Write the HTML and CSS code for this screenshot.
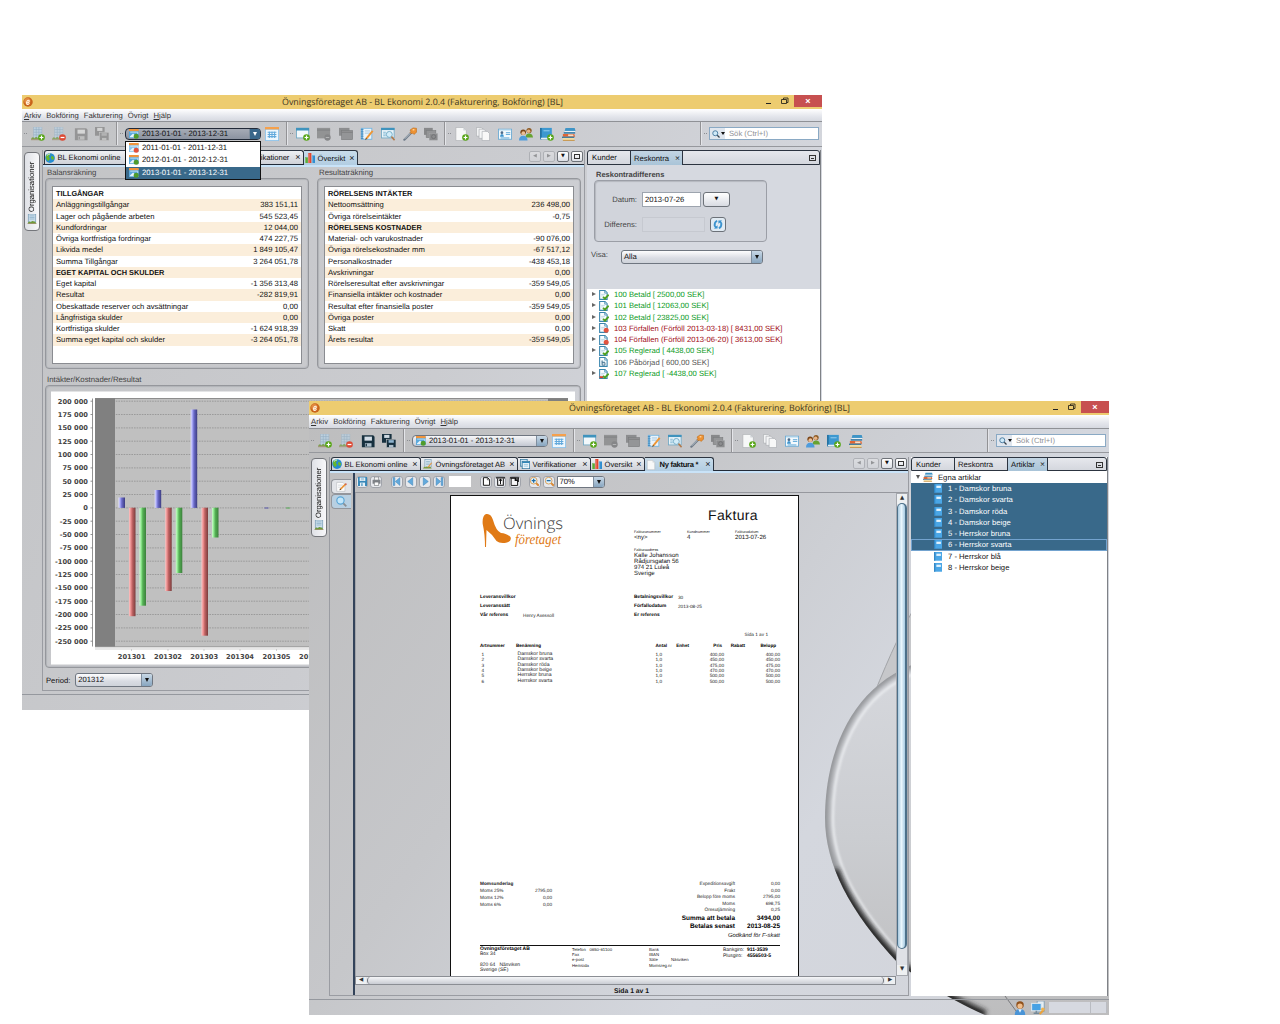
FILE: index.html
```html
<!DOCTYPE html>
<html lang="sv">
<head>
<meta charset="utf-8">
<title>BL Ekonomi</title>
<link rel="stylesheet" href="styles.css">
</head>
<body>
<svg class="defs" aria-hidden="true">
<defs>
<linearGradient id="gb"><stop offset="0" stop-color="#e4e4ff"/><stop offset=".3" stop-color="#9c9cf0"/><stop offset=".5" stop-color="#6a6ac8"/><stop offset="1" stop-color="#3c3c80"/></linearGradient>
<linearGradient id="gr"><stop offset="0" stop-color="#ffc4c4"/><stop offset=".3" stop-color="#e88a8a"/><stop offset=".5" stop-color="#c06464"/><stop offset="1" stop-color="#7a3c3c"/></linearGradient>
<linearGradient id="gg"><stop offset="0" stop-color="#d0ffd0"/><stop offset=".3" stop-color="#84e084"/><stop offset=".5" stop-color="#54b054"/><stop offset="1" stop-color="#3c803c"/></linearGradient>
<linearGradient id="disc" x1="0" y1="0" x2="0" y2="1"><stop offset="0" stop-color="#d6d8dd"/><stop offset=".5" stop-color="#cbcdd1"/><stop offset="1" stop-color="#bdbdbe"/></linearGradient>
<filter id="soft"><feGaussianBlur stdDeviation="2.5"/></filter>
<filter id="soft1"><feGaussianBlur stdDeviation=".8"/></filter>
<clipPath id="inside"><path d="M920 662C850 685 825 755 825 818C825 865 850 912 898 963C925 983 945 997 985 1015H1109V662z"/></clipPath>
<symbol id="plus" viewBox="0 0 8 8"><circle cx="4" cy="4" r="3.8" fill="#58a618"/><path d="M4 1.800v4.400M1.800 4h4.400" stroke="#fff" stroke-width="1.4"/></symbol>
<symbol id="minus" viewBox="0 0 8 8"><circle cx="4" cy="4" r="3.8" fill="#dd4b36"/><path d="M1.800 4h4.400" stroke="#fff" stroke-width="1.4"/></symbol>
<symbol id="sheet" viewBox="0 0 16 16"><rect x="3" y="0" width="9.500" height="12.500" fill="#bdd0df" stroke="#a3b7c6" stroke-width=".7"/><path d="M3 3h9.500M3 6h9.500M3 9h9.500M6 0v12M9 0v12" stroke="#93adc1" stroke-width=".7"/><path d="M0 14q1.500-4 4-1 2-3 4 0 2-3 4 1z" fill="#7da04e"/><path d="M0 14.500h12" stroke="#9c8a66"/></symbol>
<symbol id="sheet-add" viewBox="0 0 16 16"><use href="#sheet"/><use href="#plus" x="8" y="8" width="8" height="8"/></symbol>
<symbol id="sheet-del" viewBox="0 0 16 16"><use href="#sheet" opacity=".8"/><use href="#minus" x="8" y="8" width="8" height="8"/></symbol>
<symbol id="save" viewBox="0 0 16 16"><path d="M1 1.500h13l1.500 1.500v12H1z" fill="currentColor"/><rect x="4" y="3" width="8.500" height="4.600" fill="#d3dde6"/><rect x="4.500" y="10.500" width="7.500" height="4" fill="#aebfcc"/><path d="M6 11v3" stroke="currentColor" stroke-width="1.500"/></symbol>
<symbol id="saves" viewBox="0 0 16 16"><rect x="0" y="0" width="11" height="10" fill="currentColor"/><rect x="2.500" y="1" width="6" height="3.500" fill="#cfd9e2"/><rect x="5" y="6" width="11" height="9.500" fill="currentColor" stroke="#c5c6c9" stroke-width=".7"/><rect x="7.500" y="7" width="6" height="3" fill="#8fb4d0"/><rect x="8" y="12.500" width="5" height="3" fill="#aebfcc"/></symbol>
<symbol id="cal" viewBox="0 0 16 16"><rect x="0" y="1" width="15.500" height="13.500" fill="#5ba9dc"/><rect x="0" y="0" width="15.500" height="3.500" fill="#f0943c"/><path d="M1.500 12l5-5 4 4v2h-9z" fill="#e6f3fb"/><path d="M2 5h12v3" stroke="#bfe0f4" fill="none" stroke-width="1.500"/><circle cx="11.500" cy="11.500" r="4" fill="#4f9c2c"/></symbol>
<symbol id="cal-red" viewBox="0 0 16 16"><rect x="0" y="1" width="15.500" height="13.500" fill="#8fc5ea"/><rect x="0" y="0" width="15.500" height="3.500" fill="#f0943c"/><path d="M1.500 12l5-5 4 4v2h-9z" fill="#e6f3fb"/><path d="M2 5h12v3" stroke="#d5ebf8" fill="none" stroke-width="1.500"/><circle cx="11.500" cy="11.500" r="4" fill="#e2503c"/></symbol>
<symbol id="calgrid" viewBox="0 0 16 16"><rect x="0" y="0" width="16" height="16" fill="#8cc2e8"/><rect x="0" y="0" width="16" height="2.800" fill="#f5a04c"/><rect x="1" y="3.200" width="14" height="11.800" fill="#eef7fd"/><path d="M3 6h10M3 8.500h10M3 11h10M5 5v7.500M8 5v7.500M11 5v7.500" stroke="#62a9dc" stroke-width="1.200"/></symbol>
<symbol id="win-add" viewBox="0 0 16 16"><rect x=".5" y="1.500" width="14" height="11" fill="#f2f8fb" stroke="#73a9c4"/><rect x="0" y="1" width="15" height="3" fill="#3f93bd"/><use href="#plus" x="8" y="8" width="8" height="8"/></symbol>
<symbol id="win-del" viewBox="0 0 16 16"><rect x="0" y="1" width="15" height="12" fill="#929394"/><path d="M0 3.500h15" stroke="#7d7e80"/><circle cx="12" cy="12" r="3.600" fill="#858688"/><path d="M10 12h4" stroke="#b9babb"/></symbol>
<symbol id="wins" viewBox="0 0 16 16"><rect x="0" y="1" width="12" height="9" fill="#8c8d8f"/><rect x="3" y="4" width="12.500" height="10.500" fill="#949597" stroke="#7b7c7e" stroke-width=".7"/><path d="M3 6h12.500" stroke="#7b7c7e"/></symbol>
<symbol id="wins-find" viewBox="0 0 16 16"><rect x="0" y="1" width="10" height="8" fill="#87888a"/><rect x="2.500" y="4" width="11" height="8" fill="#949597" stroke="#7b7c7e" stroke-width=".7"/><rect x="6" y="7.500" width="9.500" height="7.500" fill="#8b8c8e" stroke="#a7a8aa" stroke-width=".5"/><circle cx="11" cy="11" r="2.300" fill="none" stroke="#6f7072"/></symbol>
<symbol id="note" viewBox="0 0 16 16"><rect x="1" y="1" width="13" height="13.500" fill="#74b4df"/><rect x="3.500" y="2" width="9.500" height="11.500" fill="#e9f3fa"/><path d="M1 3h3M1 5.500h3M1 8h3M1 10.500h3M1 13h3" stroke="#3e85b8"/><path d="M5.500 7h6M5.500 4.500h6" stroke="#9cc5e0"/><path d="M7 13.500l7.500-9" stroke="#ed9636" stroke-width="2.200"/><path d="M5.800 15l1-2.500 1.200 1z" fill="#4a3820"/></symbol>
<symbol id="win-find" viewBox="0 0 16 16"><rect x=".5" y="1.500" width="14.500" height="11" fill="#eaf4f9" stroke="#73a9c4"/><rect x="0" y="1" width="15.500" height="2.500" fill="#3f93bd"/><path d="M2.500 6h3M2.500 8h3M2.500 10h3" stroke="#77b2d1"/><circle cx="9.500" cy="8.500" r="3.400" fill="#d2ecf8" stroke="#6aa6c2"/><path d="M12 11l3.500 4" stroke="#b27a4c" stroke-width="1.800"/></symbol>
<symbol id="wand" viewBox="0 0 16 16"><path d="M1.500 14.500L10 6" stroke="#6e7b88" stroke-width="2.400" stroke-linecap="round"/><path d="M2 13.500l7-7" stroke="#c3ccd6"/><path d="M8 3.500L11.500 1l4 .5v4.500l-3 2.500-1.500-1.500-2 .5-1-1.500 1-1z" fill="#ee9232" stroke="#b66516" stroke-width=".6"/><path d="M11 3.500l2-.5" stroke="#ffe0b5" stroke-width="1.300"/></symbol>
<symbol id="page" viewBox="0 0 16 16"><path d="M2 .5h8.500L14 4v11.500H2z" fill="#f7f8f8" stroke="#a9acb0" stroke-width=".7"/><path d="M10.500.5V4H14z" fill="#d2d6da"/></symbol>
<symbol id="page-add" viewBox="0 0 16 16"><use href="#page" x="-1"/><use href="#plus" x="8" y="8" width="8" height="8"/></symbol>
<symbol id="pages" viewBox="0 0 16 16"><path d="M.5.500H6L8 2.500v8H.500z" fill="#f2f3f4" stroke="#a5a8ac" stroke-width=".7"/><path d="M3.500 2.500H9l2.500 2.500v8h-8z" fill="#f4f5f6" stroke="#a5a8ac" stroke-width=".7"/><path d="M7 5h6l2.500 2.500v8H7z" fill="#f8f8f8" stroke="#a5a8ac" stroke-width=".7"/></symbol>
<symbol id="card" viewBox="0 0 16 16"><rect x=".5" y="2.500" width="15" height="11.500" fill="#f4fafd" stroke="#69a9d2"/><path d="M1 3.500h14" stroke="#b7d9ee" stroke-width="1.200"/><circle cx="4.500" cy="6.500" r="1.600" fill="#4c6b8a"/><path d="M2.300 11q0-3 2.200-3t2.200 3z" fill="#3d93cd"/><path d="M9 6.500h5M9 8.500h5M3 12.500h10" stroke="#4fa0d3"/></symbol>
<symbol id="people" viewBox="0 0 16 16"><circle cx="11.500" cy="4" r="3" fill="#8d5a24"/><circle cx="11" cy="4.800" r="2" fill="#e8b384"/><path d="M7.500 12q0-4.500 4-4.500t4.500 4.500z" fill="#67a331"/><circle cx="4.800" cy="6" r="3.200" fill="#7c4516"/><circle cx="5" cy="7" r="2.200" fill="#edbe93"/><path d="M0 15.500Q0 10 4.800 10t5 5.500z" fill="#4f9cdc"/></symbol>
<symbol id="book" viewBox="0 0 16 16"><path d="M2 0h14v15.500H2z" fill="#4aa6e6"/><path d="M2 0h2v15.500H2z" fill="#2f83c0"/><path d="M6 3h8v4H6z" fill="#e3f3fd"/></symbol>
<symbol id="book-add" viewBox="0 0 16 16"><path d="M0 1h13.500v13H0z" fill="#3d98d0"/><path d="M0 1h2v13H0z" fill="#2573a4"/><path d="M4 3.500h7v1.500H4z" fill="#7fc1e8"/><path d="M1 13h12" stroke="#e6eef3" stroke-width="1.500"/><use href="#plus" x="8" y="8" width="8" height="8"/></symbol>
<symbol id="books" viewBox="0 0 16 16"><path d="M4 1h10.500l1 3.500H3z" fill="#3f94c6"/><path d="M3 4.500h12v1.500H3z" fill="#eaf1f5"/><path d="M2 6h13v1.500H2z" fill="#1e6c9c"/><path d="M1 8h13l1 3H1z" fill="#e16634"/><path d="M7 8.500h6v2H7z" fill="#f8dcc3"/><path d="M0 11h14v1.500H0z" fill="#31759a"/><path d="M1 12.500h13V15H1z" fill="#f1dca6"/><path d="M1 15.300h13.500" stroke="#c58a33"/></symbol>
<symbol id="globe" viewBox="0 0 16 16"><circle cx="8" cy="8" r="7.800" fill="#268cd2"/><path d="M2 4q4-5 7-2.500L6 6l2 3-3 4q-3-3-3.500-6zM11 4l3.500 3-1 4-3-1-1-3z" fill="#69b72b"/><path d="M3 4q2-2.500 5-2.500" stroke="#d8f2ff" stroke-width="1.500" fill="none"/></symbol>
<symbol id="org" viewBox="0 0 16 16"><rect x="3" y="1" width="10" height="12" fill="#dae7f0" stroke="#6f94ad"/><path d="M5 4h6M5 6.500h6M5 9h6" stroke="#7ca5be"/><path d="M0 15q2-4 4-2 2-2 4 0 3-3 6 2z" fill="#7b993c"/><path d="M8 13l6-7" stroke="#e9963e" stroke-width="1.800"/></symbol>
<symbol id="orgs" viewBox="0 0 16 16"><rect x="2" y="0" width="12" height="13" fill="#cfe0ec" stroke="#6790ad"/><path d="M4 3h8M4 5.500h8M4 8h8" stroke="#78a3c0"/><path d="M1 15q2-5 5-2 3-3 5-1 2-1 4 3z" fill="#6f9a3a"/><path d="M1 15.300h14" stroke="#8d7449"/></symbol>
<symbol id="verif" viewBox="0 0 16 16"><rect x=".5" y=".5" width="11" height="11" fill="#cfe5f1" stroke="#33789f" stroke-width="1.300"/><rect x="3.500" y="4" width="12" height="11.500" fill="#eef7fb" stroke="#33789f" stroke-width="1.300"/><path d="M3.500 5.500h12" stroke="#2f86b8" stroke-width="2"/><path d="M6 9h7M6 11.500h7" stroke="#75b2d4"/></symbol>
<symbol id="bars" viewBox="0 0 16 16"><rect x="0" y="7" width="4.500" height="9" fill="#55a832"/><rect x="5.200" y="0" width="5" height="16" fill="#e3452c"/><rect x="11" y="4" width="5" height="12" fill="#2f8dd0"/><path d="M1 8v8M6.500 1v15M12.200 5v11" stroke="#fff" stroke-opacity=".5"/></symbol>
<symbol id="mag" viewBox="0 0 16 16"><circle cx="6.500" cy="6.500" r="5" fill="#cfe9f8" stroke="#44759b" stroke-width="1.800"/><path d="M10.500 10.500l4.500 4.500" stroke="#33414d" stroke-width="2.500"/></symbol>
<symbol id="zin" viewBox="0 0 16 16"><path d="M10.500 10.500l5 5" stroke="#d88834" stroke-width="3.500"/><circle cx="6.500" cy="6.500" r="6" fill="#e1f3fd" stroke="#d99440" stroke-width="1.500"/><path d="M6.500 3v7M3 6.500h7" stroke="#1c6aa4" stroke-width="2.200"/></symbol>
<symbol id="zout" viewBox="0 0 16 16"><path d="M10.500 10.500l5 5" stroke="#d88834" stroke-width="3.500"/><circle cx="6.500" cy="6.500" r="6" fill="#e1f3fd" stroke="#d99440" stroke-width="1.500"/><path d="M3 6.500h7" stroke="#1c6aa4" stroke-width="2.200"/></symbol>
<symbol id="first" viewBox="0 0 16 16"><path d="M2 1h3v14H2zM14 1v14L6 8z" fill="#62a9dc" stroke="#3b80b3" stroke-width=".8"/></symbol>
<symbol id="prev" viewBox="0 0 16 16"><path d="M12 1v14L3 8z" fill="#62a9dc" stroke="#3b80b3" stroke-width=".8"/></symbol>
<symbol id="next" viewBox="0 0 16 16"><path d="M4 1v14l9-7z" fill="#62a9dc" stroke="#3b80b3" stroke-width=".8"/></symbol>
<symbol id="last" viewBox="0 0 16 16"><path d="M2 1v14l8-7zM11 1h3v14h-3z" fill="#62a9dc" stroke="#3b80b3" stroke-width=".8"/></symbol>
<symbol id="pg1" viewBox="0 0 16 16"><path d="M2.500 1.200h7.500l3.500 3.500v10h-11z" fill="#fff" stroke="#111" stroke-width="1.700"/><path d="M9.500 1v4h4" fill="none" stroke="#111"/></symbol>
<symbol id="pg2" viewBox="0 0 16 16"><path d="M3 2.500v12h10v-12" fill="#fff" stroke="#111" stroke-width="1.800"/><path d="M0 1.500h16" stroke="#111" stroke-width="2.200"/><path d="M8 4v9M5.500 6.500L8 4l2.500 2.500" stroke="#111" stroke-width="1.800" fill="none"/></symbol>
<symbol id="pg3" viewBox="0 0 16 16"><path d="M2 2v13h11.500V6l-3.500-4z" fill="#f5f5f6" stroke="#111" stroke-width="1.700"/><path d="M0 1.500h16M14.500 1v8M9.500 2v4h5" stroke="#111" stroke-width="2.400" fill="none"/></symbol>
<symbol id="printer" viewBox="0 0 16 16"><rect x="4" y="0" width="8" height="6" fill="#f5f5f5" stroke="#6d7074"/><rect x="1" y="5" width="14" height="7" rx="1" fill="#7f8388"/><rect x="4" y="9" width="8" height="6" fill="#fafafa" stroke="#6d7074"/></symbol>
<symbol id="bsave" viewBox="0 0 16 16"><rect x="0" y="0" width="16" height="16" fill="#3788b9"/><rect x="3" y="1" width="10" height="6" fill="#eef6fa"/><path d="M5 3h6M5 5h6" stroke="#67a1c4"/><rect x="3.500" y="10" width="9" height="6" fill="#e4f0f7"/><path d="M7 11v5" stroke="#3788b9" stroke-width="2"/></symbol>
<symbol id="edit" viewBox="0 0 16 16"><path d="M1 2h9l3 3v10H1z" fill="#fdfdfd" stroke="#aaadb2" stroke-width=".7"/><path d="M3 6h7M3 9h5" stroke="#c5c9cd"/><path d="M6.500 12l7-7" stroke="#ea9338" stroke-width="2.500"/><path d="M5 13.500l.8-2.500 1.800 1.700z" fill="#463723"/><circle cx="14.200" cy="4.600" r="1.400" fill="#d3664e"/></symbol>
<symbol id="look" viewBox="0 0 16 16"><path d="M10 10l5 5" stroke="#8b9095" stroke-width="2.600"/><circle cx="6.500" cy="6.500" r="5.300" fill="#c3e6fa" stroke="#5ba6d6" stroke-width="1.700"/></symbol>
<symbol id="doc" viewBox="0 0 16 16"><path d="M1 .8h8.500L13 4.300V15H1z" fill="#fafdff" stroke="#3a86ae" stroke-width="1.700"/><path d="M9 1v4h4" fill="#cde2ee" stroke="#3a86ae"/><path d="M3.500 7h6M3.500 9.500h4" stroke="#9fc3d8"/></symbol>
<symbol id="doc-ok" viewBox="0 0 16 16"><use href="#doc"/><path d="M6.500 11l3 3 6-6.500" stroke="#4fa121" stroke-width="3" fill="none"/></symbol>
<symbol id="doc-neg" viewBox="0 0 16 16"><use href="#doc"/><path d="M1 13h6" stroke="#d6402c" stroke-width="3"/><path d="M6.500 11l3 3 6-6.500" stroke="#4fa121" stroke-width="3" fill="none"/></symbol>
<symbol id="doc-bad" viewBox="0 0 16 16"><use href="#doc"/><circle cx="11.500" cy="11.500" r="4" fill="#e25440"/></symbol>
<symbol id="doc-b" viewBox="0 0 16 16"><use href="#doc"/><path d="M5 5.500v7.500h4.500v-4H5" fill="none" stroke="#3f6f8c" stroke-width="1.500"/></symbol>
<symbol id="user" viewBox="0 0 16 16"><path d="M2 16q0-7 6-7t6 7z" fill="#4a94d6"/><path d="M6 9.500l2 4 2-4z" fill="#e8f3fc"/><circle cx="8" cy="4.500" r="4.300" fill="#90501a"/><circle cx="8" cy="5.800" r="3" fill="#f0bd8a"/></symbol>
<symbol id="pc" viewBox="0 0 16 16"><rect x="7" y="0" width="8" height="12" fill="#e6eef3" stroke="#6f8ea5" stroke-width=".8"/><rect x=".7" y="2.700" width="11" height="8.500" fill="#48a2e4" stroke="#dfe8ee" stroke-width="1.200"/><path d="M3 14h7M6 11v3" stroke="#758a99" stroke-width="1.600"/><path d="M10 15l4.500-5" stroke="#eaa23c" stroke-width="2.300"/><circle cx="13.500" cy="9.500" r="2" fill="#f0b452"/></symbol>
<symbol id="logo" viewBox="0 0 16 16"><circle cx="8" cy="8" r="7.600" fill="#c9641b"/><circle cx="7" cy="6.500" r="5" fill="#e38b42"/><path d="M5.500 9.500q5-.5 4.500-3.500-1-2-3.500.5-2 3.500 0 5.500 2 .5 4-2" fill="none" stroke="#fff3e3" stroke-width="1.700"/></symbol>
<symbol id="restore" viewBox="0 0 8 8"><path d="M.5 2.500h5v4h-5zM2.500 2.500V1H7v4.500H5.500" fill="none" stroke="#2f2a1c" stroke-width=".9"/></symbol>
</defs>
</svg>

<main class="desktop">

<section class="win win-back">
  <header class="title"><svg class="i11"><use href="#logo"/></svg><h1>Övningsföretaget AB - BL Ekonomi 2.0.4 (Fakturering, Bokföring) [BL]</h1><div class="wbtns"><i class="wmin"></i><svg><use href="#restore"/></svg><b>×</b></div></header>
  <nav class="menu"><span><u>A</u>rkiv</span><span>Bokföring</span><span>Fakturering</span><span>Övrigt</span><span><u>H</u>jälp</span></nav>
  <div class="tools">
    <div class="tg g1 off"><i class="grip"></i><svg><use href="#sheet-add"/></svg><svg><use href="#sheet-del"/></svg><svg><use href="#save"/></svg><svg><use href="#saves"/></svg></div>
    <div class="tg g2"><i class="grip"></i>
      <div class="combo year open"><svg><use href="#cal"/></svg><span>2013-01-01 - 2013-12-31</span><i class="arr"></i>
        <ul class="drop"><li><svg><use href="#cal-red"/></svg>2011-01-01 - 2011-12-31</li><li><svg><use href="#cal"/></svg>2012-01-01 - 2012-12-31</li><li class="sel"><svg><use href="#cal"/></svg>2013-01-01 - 2013-12-31</li></ul>
      </div><svg><use href="#calgrid"/></svg></div>
    <div class="tg g3"><i class="grip"></i><svg><use href="#win-add"/></svg><svg><use href="#win-del"/></svg><svg><use href="#wins"/></svg><svg><use href="#note"/></svg><svg><use href="#win-find"/></svg><svg><use href="#wand"/></svg><svg><use href="#wins-find"/></svg></div>
    <div class="tg g4"><i class="grip"></i><svg><use href="#page-add"/></svg><svg><use href="#pages"/></svg><svg><use href="#card"/></svg><svg><use href="#people"/></svg><svg><use href="#book-add"/></svg><svg><use href="#books"/></svg></div>
    <div class="tg g5"><i class="grip"></i><div class="search"><svg><use href="#mag"/></svg><i class="tri"></i><span>Sök (Ctrl+I)</span></div></div>
  </div>
  <div class="work">
    <aside class="side"><div class="vtab"><svg><use href="#orgs"/></svg><span>Organisationer</span></div></aside>
    <div class="pane left">
      <div class="tabs">
        <div class="tab t1"><svg><use href="#globe"/></svg><span>BL Ekonomi online</span><i>×</i></div>
        <div class="tab t2"><svg><use href="#org"/></svg><span>Övningsföretaget AB</span><i>×</i></div>
        <div class="tab t3"><svg><use href="#verif"/></svg><span>Verifikationer</span><i>×</i></div>
        <div class="tab t4 on"><svg><use href="#bars"/></svg><span>Översikt</span><i>×</i></div>
        <div class="tabctl"><b class="dim">◀</b><b class="dim">▶</b><b>▼</b><b><i class="sq"></i></b></div>
      </div>
      <div class="strip"></div>
      <div class="overview">
        <div class="duo">
          <div class="box"><h2>Balansräkning</h2><div class="frame"><div class="list">
            <p class="h">TILLGÅNGAR</p>
            <p>Anläggningstillgångar<b>383 151,11</b></p>
            <p>Lager och pågående arbeten<b>545 523,45</b></p>
            <p>Kundfordringar<b>12 044,00</b></p>
            <p>Övriga kortfristiga fordringar<b>474 227,75</b></p>
            <p>Likvida medel<b>1 849 105,47</b></p>
            <p>Summa Tillgångar<b>3 264 051,78</b></p>
            <p class="h">EGET KAPITAL OCH SKULDER</p>
            <p>Eget kapital<b>-1 356 313,48</b></p>
            <p>Resultat<b>-282 819,91</b></p>
            <p>Obeskattade reserver och avsättningar<b>0,00</b></p>
            <p>Långfristiga skulder<b>0,00</b></p>
            <p>Kortfristiga skulder<b>-1 624 918,39</b></p>
            <p>Summa eget kapital och skulder<b>-3 264 051,78</b></p>
          </div></div></div>
          <div class="box"><h2>Resultaträkning</h2><div class="frame"><div class="list">
            <p class="h">RÖRELSENS INTÄKTER</p>
            <p>Nettoomsättning<b>236 498,00</b></p>
            <p>Övriga rörelseintäkter<b>-0,75</b></p>
            <p class="h">RÖRELSENS KOSTNADER</p>
            <p>Material- och varukostnader<b>-90 076,00</b></p>
            <p>Övriga rörelsekostnader mm<b>-67 517,12</b></p>
            <p>Personalkostnader<b>-438 453,18</b></p>
            <p>Avskrivningar<b>0,00</b></p>
            <p>Rörelseresultat efter avskrivningar<b>-359 549,05</b></p>
            <p>Finansiella intäkter och kostnader<b>0,00</b></p>
            <p>Resultat efter finansiella poster<b>-359 549,05</b></p>
            <p>Övriga poster<b>0,00</b></p>
            <p>Skatt<b>0,00</b></p>
            <p>Årets resultat<b>-359 549,05</b></p>
          </div></div></div>
        </div>
        <div class="box chartbox"><h2>Intäkter/Kostnader/Resultat</h2><div class="frame">
          <svg class="chart" viewBox="51 391.500 524 272">
            <rect x="51" y="391" width="524" height="273" fill="#fff"/>
            <rect x="95" y="398" width="473" height="248" fill="#c0c0c0"/>
            <path d="M95 400.700H568M95 414H568M95 427.400H568M95 440.700H568M95 454H568M95 467.400H568M95 480.700H568M95 494H568M95 507.400H568M95 520.700H568M95 534H568M95 547.400H568M95 560.700H568M95 574H568M95 587.400H568M95 600.700H568M95 614H568M95 627.400H568M95 640.700H568" stroke="#909090" stroke-width=".8" stroke-dasharray="1.600 1"/>
            <path d="M95 398h20v248H95zM548 398h20v248h-20z" fill="#808080"/>
            <path d="M92.500 398v248M90.500 400.700h2M90.500 414h2M90.500 427.400h2M90.500 440.700h2M90.500 454h2M90.500 467.400h2M90.500 480.700h2M90.500 494h2M90.500 507.400h2M90.500 520.700h2M90.500 534h2M90.500 547.400h2M90.500 560.700h2M90.500 574h2M90.500 587.400h2M90.500 600.700h2M90.500 614h2M90.500 627.400h2M90.500 640.700h2M95 398h473M95 646.300h473" stroke="#777" stroke-width=".8"/>
            <path d="M95 648.500h473M131.500 648.500v2M168 648.500v2M204 648.500v2M240 648.500v2M276.500 648.500v2" stroke="#bbb" stroke-width=".7"/>
            <g fill="url(#gb)"><rect x="118.500" y="497" width="6.500" height="10.400"/><rect x="154.700" y="489.500" width="6.500" height="17.900"/><rect x="190.700" y="409" width="6.500" height="98.400"/></g>
            <g fill="url(#gr)"><rect x="129" y="507.200" width="6.500" height="108.500"/><rect x="165.200" y="507.200" width="6.500" height="83.300"/><rect x="201.500" y="507.200" width="6.500" height="128"/></g>
            <g fill="url(#gg)"><rect x="139.500" y="507.200" width="6.500" height="98"/><rect x="175.800" y="507.200" width="6.500" height="65.300"/><rect x="212" y="507.200" width="6.500" height="29.800"/></g>
            <path d="M264.500 507.500h4" stroke="#55a"/><path d="M286 507.500h4" stroke="#5a5"/>
            <g class="ylab" text-anchor="end"><text x="88" y="403.100">200 000</text><text x="88" y="416.400">175 000</text><text x="88" y="429.800">150 000</text><text x="88" y="443.100">125 000</text><text x="88" y="456.400">100 000</text><text x="88" y="469.800">75 000</text><text x="88" y="483.100">50 000</text><text x="88" y="496.400">25 000</text><text x="88" y="509.800">0</text><text x="88" y="523.100">-25 000</text><text x="88" y="536.400">-50 000</text><text x="88" y="549.800">-75 000</text><text x="88" y="563.100">-100 000</text><text x="88" y="576.400">-125 000</text><text x="88" y="589.800">-150 000</text><text x="88" y="603.100">-175 000</text><text x="88" y="616.400">-200 000</text><text x="88" y="629.800">-225 000</text><text x="88" y="643.100">-250 000</text></g>
            <g class="ylab" text-anchor="middle"><text x="131.700" y="658.300">201301</text><text x="168" y="658.300">201302</text><text x="204.200" y="658.300">201303</text><text x="240" y="658.300">201304</text><text x="276.500" y="658.300">201305</text><text x="313" y="658.300">201306</text></g>
          </svg></div></div>
        <div class="period"><span>Period:</span><div class="combo"><span>201312</span><i class="arr"></i></div></div>
      </div>
    </div>
    <div class="pane right">
      <div class="tabs"><div class="tab r1"><span>Kunder</span></div><div class="tab r2 on"><span>Reskontra</span><i>×</i></div><b class="minbox"></b></div>
      <div class="ledger">
        <h3>Reskontradifferens</h3>
        <div class="diff"><label>Datum:</label><div class="field">2013-07-26</div><b class="btn wide">▼</b><label>Differens:</label><div class="field ro"></div><b class="btn refresh"><svg viewBox="0 0 12 12"><path d="M5 1.500Q1.500 3 2 7.500l2 2.500M7 10.500q3.500-1.500 3-6L8 2" fill="none" stroke="#3b93cf" stroke-width="2.200"/><path d="M1 10.800h4.500V7M11 1.200H6.500V5" fill="#3b93cf"/></svg></b></div>
        <div class="visa"><label>Visa:</label><div class="combo"><span>Alla</span><i class="arr"></i></div></div>
      </div>
      <ul class="tree">
        <li class="ok"><i></i><svg><use href="#doc-ok"/></svg>100 Betald [ 2500,00 SEK]</li>
        <li class="ok"><i></i><svg><use href="#doc-ok"/></svg>101 Betald [ 12063,00 SEK]</li>
        <li class="ok"><i></i><svg><use href="#doc-ok"/></svg>102 Betald [ 23825,00 SEK]</li>
        <li class="bad"><i></i><svg><use href="#doc-bad"/></svg>103 Förfallen (Förföll 2013-03-18) [ 8431,00 SEK]</li>
        <li class="bad"><i></i><svg><use href="#doc-bad"/></svg>104 Förfallen (Förföll 2013-06-20) [ 3613,00 SEK]</li>
        <li class="ok"><i></i><svg><use href="#doc-ok"/></svg>105 Reglerad [ 4438,00 SEK]</li>
        <li class="leaf"><i></i><svg><use href="#doc-b"/></svg>106 Påbörjad [ 600,00 SEK]</li>
        <li class="ok"><i></i><svg><use href="#doc-neg"/></svg>107 Reglerad [ -4438,00 SEK]</li>
      </ul>
    </div>
  </div>
  <footer class="status"></footer>
</section>

<section class="win win-front">
  <svg class="swoosh" viewBox="309 401 800 614">
    <path d="M912 612Q893 645 867 712L912 690z" fill="#c6c7ca"/>
    <path d="M912 612Q893 645 867 712" fill="none" stroke="#a2a4a8" stroke-width="1"/>
    <g clip-path="url(#inside)">
      <rect x="820" y="660" width="290" height="356" fill="url(#disc)"/>
      <path d="M920 662C850 685 825 755 825 818C825 865 850 912 898 963" fill="none" stroke="#8d8f93" stroke-width="7" filter="url(#soft)"/>
      <path d="M920 672C857 692 833 758 833 818C833 862 856 905 902 955" fill="none" stroke="#eceef1" stroke-width="2" filter="url(#soft1)"/>
      <path d="M834 870C845 900 870 934 898 963C925 983 945 997 985 1015" fill="none" stroke="#222" stroke-width="9" filter="url(#soft)"/>
    </g>
    <path d="M1005 996l14 19" stroke="#77787b"/>
  </svg>
  <header class="title"><svg class="i11"><use href="#logo"/></svg><h1>Övningsföretaget AB - BL Ekonomi 2.0.4 (Fakturering, Bokföring) [BL]</h1><div class="wbtns"><i class="wmin"></i><svg><use href="#restore"/></svg><b>×</b></div></header>
  <nav class="menu"><span><u>A</u>rkiv</span><span>Bokföring</span><span>Fakturering</span><span>Övrigt</span><span><u>H</u>jälp</span></nav>
  <div class="tools">
    <div class="tg g1"><i class="grip"></i><svg><use href="#sheet-add"/></svg><svg><use href="#sheet-del"/></svg><svg><use href="#save"/></svg><svg><use href="#saves"/></svg></div>
    <div class="tg g2"><i class="grip"></i><div class="combo year"><svg><use href="#cal"/></svg><span>2013-01-01 - 2013-12-31</span><i class="arr"></i></div><svg><use href="#calgrid"/></svg></div>
    <div class="tg g3"><i class="grip"></i><svg><use href="#win-add"/></svg><svg><use href="#win-del"/></svg><svg><use href="#wins"/></svg><svg><use href="#note"/></svg><svg><use href="#win-find"/></svg><svg><use href="#wand"/></svg><svg><use href="#wins-find"/></svg></div>
    <div class="tg g4"><i class="grip"></i><svg><use href="#page-add"/></svg><svg><use href="#pages"/></svg><svg><use href="#card"/></svg><svg><use href="#people"/></svg><svg><use href="#book-add"/></svg><svg><use href="#books"/></svg></div>
    <div class="tg g5"><i class="grip"></i><div class="search"><svg><use href="#mag"/></svg><i class="tri"></i><span>Sök (Ctrl+I)</span></div></div>
  </div>
  <div class="work">
    <aside class="side"><div class="vtab"><svg><use href="#orgs"/></svg><span>Organisationer</span></div></aside>
    <div class="pane left">
      <div class="tabs">
        <div class="tab t1"><svg><use href="#globe"/></svg><span>BL Ekonomi online</span><i>×</i></div>
        <div class="tab t2"><svg><use href="#org"/></svg><span>Övningsföretaget AB</span><i>×</i></div>
        <div class="tab t3"><svg><use href="#verif"/></svg><span>Verifikationer</span><i>×</i></div>
        <div class="tab t4"><svg><use href="#bars"/></svg><span>Översikt</span><i>×</i></div>
        <div class="tab t5 on"><svg><use href="#page"/></svg><span>Ny faktura *</span><i>×</i></div>
        <div class="tabctl"><b class="dim">◀</b><b class="dim">▶</b><b>▼</b><b><i class="sq"></i></b></div>
      </div>
      <div class="strip"></div>
      <div class="viewer">
        <div class="modes"><b><svg><use href="#edit"/></svg></b><b class="cur"><svg><use href="#look"/></svg></b></div>
        <div class="preview">
          <div class="ptools">
            <b><svg><use href="#bsave"/></svg></b><b class="s1"><svg><use href="#printer"/></svg></b>
            <b><svg><use href="#first"/></svg></b><b><svg><use href="#prev"/></svg></b><b><svg><use href="#next"/></svg></b><b><svg><use href="#last"/></svg></b>
            <span class="pno"></span>
            <b><svg><use href="#pg1"/></svg></b><b><svg><use href="#pg2"/></svg></b><b class="s2"><svg><use href="#pg3"/></svg></b>
            <b><svg><use href="#zin"/></svg></b><b><svg><use href="#zout"/></svg></b>
            <div class="combo zoom"><span>70%</span><i class="arr"></i></div>
          </div>
          <div class="scroller">
            <div class="canvas">
              <article class="inv">
                <div class="inv-top">
                  <svg class="brand" viewBox="480 508 90 44"><path d="M486 514Q491 513 493 520Q496 531 501 533Q506 533 510.500 537Q512 541 507 542.500Q500 544 496.500 541Q492 534 486.500 530L486 547H485Q485 534 482.700 524Q482 516 486 514z" fill="#e07a16"/><text x="503" y="528.500" class="bt1" textLength="60" lengthAdjust="spacingAndGlyphs">Övnings</text><text x="515" y="543.500" class="bt2" textLength="46" lengthAdjust="spacingAndGlyphs">företaget</text></svg>
                  <div class="inv-id"><h2>Faktura</h2>
                    <dl class="ids"><div><dt>Fakturanummer</dt><dd>&lt;ny&gt;</dd></div><div><dt>Kundnummer</dt><dd>4</dd></div><div><dt>Fakturadatum</dt><dd>2013-07-26</dd></div></dl>
                    <address><small>Fakturaadress</small>Kalle Johansson<br>Rådjursgatan 56<br>974 21 Luleå<br>Sverige</address>
                  </div>
                </div>
                <div class="terms"><b>Leveransvillkor</b><span></span><b>Betalningsvillkor</b><span>30</span><b>Leveranssätt</b><span></span><b>Förfallodatum</b><span>2013-08-25</span><b>Vår referens</b><span>Henry Axessoll</span><b>Er referens</b><span></span></div>
                <div class="pgno">Sida 1 av 1</div>
                <div class="lines hd"><b>Artnummer</b><b>Benämning</b><b>Antal</b><b>Enhet</b><b>Pris</b><b>Rabatt</b><b>Belopp</b></div>
                <div class="lines"><span>1</span><span>Damskor bruna</span><span>1,0</span><span></span><span>400,00</span><span></span><span>400,00</span></div>
                <div class="lines"><span>2</span><span>Damskor svarta</span><span>1,0</span><span></span><span>450,00</span><span></span><span>450,00</span></div>
                <div class="lines"><span>3</span><span>Damskor röda</span><span>1,0</span><span></span><span>475,00</span><span></span><span>475,00</span></div>
                <div class="lines"><span>4</span><span>Damskor beige</span><span>1,0</span><span></span><span>470,00</span><span></span><span>470,00</span></div>
                <div class="lines"><span>5</span><span>Herrskor bruna</span><span>1,0</span><span></span><span>500,00</span><span></span><span>500,00</span></div>
                <div class="lines"><span>6</span><span>Herrskor svarta</span><span>1,0</span><span></span><span>500,00</span><span></span><span>500,00</span></div>
                <div class="sums">
                  <div class="vat"><p><b>Momsunderlag</b></p><p>Moms 25%<span>2795,00</span></p><p>Moms 12%<span>0,00</span></p><p>Moms 6%<span>0,00</span></p></div>
                  <div class="tot"><p>Expeditionsavgift<span>0,00</span></p><p>Frakt<span>0,00</span></p><p>Belopp före moms<span>2795,00</span></p><p>Moms<span>698,75</span></p><p>Öresutjämning<span>0,25</span></p><p class="big">Summa att betala<span>3494,00</span></p><p class="big">Betalas senast<span>2013-08-25</span></p><em>Godkänd för F-skatt</em></div>
                </div>
                <div class="foot">
                  <div><b>Övningsföretaget AB</b><br>Box 34<br><br>820 64 &nbsp; Näsviken<br>Sverige (SE)</div>
                  <div>Telefon &nbsp; 0650-61100<br>Fax<br>e-post<br>Hemsida</div>
                  <div>Bank<br>IBAN<br>Säte &nbsp; &nbsp; &nbsp; &nbsp; &nbsp; Näsviken<br>Momsreg.nr</div>
                  <div class="giro"><span>Bankgiro:</span><b>911-3539</b><span>Plusgiro:</span><b>4556503-5</b></div>
                </div>
              </article>
            </div>
            <div class="vbar"><b>▲</b><i></i><b>▼</b></div>
          </div>
          <div class="hbar"><b>◀</b><i></i><b>▶</b></div>
          <div class="pagepos">Sida 1 av 1</div>
        </div>
      </div>
    </div>
    <div class="pane right">
      <div class="tabs"><div class="tab r1"><span>Kunder</span></div><div class="tab r2"><span>Reskontra</span></div><div class="tab r3 on"><span>Artiklar</span><i>×</i></div><b class="minbox"></b></div>
      <ul class="tree arts">
        <li class="root"><i></i><svg><use href="#books"/></svg>Egna artiklar</li>
        <li class="sel"><svg><use href="#book"/></svg>1 - Damskor bruna</li>
        <li class="sel"><svg><use href="#book"/></svg>2 - Damskor svarta</li>
        <li class="sel"><svg><use href="#book"/></svg>3 - Damskor röda</li>
        <li class="sel"><svg><use href="#book"/></svg>4 - Damskor beige</li>
        <li class="sel"><svg><use href="#book"/></svg>5 - Herrskor bruna</li>
        <li class="sel lead"><svg><use href="#book"/></svg>6 - Herrskor svarta</li>
        <li><svg><use href="#book"/></svg>7 - Herrskor blå</li>
        <li><svg><use href="#book"/></svg>8 - Herrskor beige</li>
      </ul>
    </div>
  </div>
  <footer class="status"><svg><use href="#user"/></svg><svg><use href="#pc"/></svg><i class="m1"></i><i class="m2"></i></footer>
</section>
</main>
</body>
</html>
```
FILE: styles.css
```css
*{box-sizing:border-box;margin:0;padding:0}
body{background:#fff;font:7.68px/11px "Liberation Sans",Arial,sans-serif;color:#111;text-rendering:geometricPrecision;overflow:hidden}
ul{list-style:none}
i,address{font-style:normal}
svg{display:block;flex:none;overflow:visible}
.defs{position:absolute;width:0;height:0}
.desktop{position:relative;width:1280px;height:1024px;overflow:hidden}
.win{position:absolute;width:800px;display:flex;flex-direction:column;overflow:hidden}
.win-back{left:22px;top:95px;height:615px;background:linear-gradient(115deg,#c2c3c5,#cbccd0 50%,#d6d9e0 85%)}
.win-front{left:309px;top:401px;height:614px;background:linear-gradient(125deg,#bdbdbe,#c6c7ca 35%,#d4d7de 65%,#d2d4da)}
.swoosh{position:absolute;left:0;top:0;width:800px;height:614px}
.win>*:not(.swoosh){position:relative}

.title{height:14px;background:#edcc70;display:flex;align-items:center;padding-left:1px;flex:none}
.i11{width:10px;height:10px}
.title h1{flex:1;text-align:center;font:8.85px/14px "Open Sans","Noto Sans",sans-serif;color:#3c3420;padding-left:50px;white-space:nowrap}
.wbtns{display:flex;height:14px;width:60px}
.wmin{width:5px;height:1px;background:#222;margin:8px 10px 0 4px}
.wbtns svg{width:8px;height:8px;margin-top:2px}
.wbtns b{width:28px;height:12px;margin-left:5px;background:#c75050;color:#fff;font-size:9px;line-height:12px;text-align:center}
.menu{height:13px;flex:none;display:flex;gap:5.2px;padding:0 2px;line-height:13px;color:#333;background:linear-gradient(#fff,#e4e6ec 60%,#d6d9e0);white-space:nowrap}
.win-back .menu{height:12px}
.tools{height:26px;flex:none;display:flex;border-top:1px solid #8f9196;border-bottom:1px solid #96989d}
.win-back .tools{padding-bottom:1px}
.win-front .tools{height:25px}
.tg{display:flex;align-items:center;gap:7.35px;border-right:2px groove #e4e5e9;white-space:nowrap}
.tg>svg{width:14px;height:14px}
.tg>.grip{width:9px;height:1px;margin-right:-7.35px;background:linear-gradient(90deg,transparent 2px,#8b8d92 2px 3px,transparent 3px 4px,#8b8d92 4px 5px,transparent 5px)}
.g1{width:96px;color:#17303f}
.g1.off>svg:nth-child(n+4){color:#84868a;filter:grayscale(1);opacity:.75}
.g2{width:170px}
.g2>.grip{width:7px}
.g2>svg{margin-left:-3px}
.g3{width:158px}
.g3>.grip{width:8px}
.g4{width:256px}
.g4>.grip{width:9px}
.g5{flex:1;border:0}
.g5>.grip{width:7px}
.combo{display:flex;align-items:center;height:14px;border:1px solid #6f7680;border-radius:3px;background:linear-gradient(#fdfdfe,#d9dce3 60%,#cfd3da);padding-left:2px;color:#111;line-height:12px}
.combo span{flex:1;white-space:nowrap}
.arr{width:11px;align-self:stretch;border-left:1px solid #7f8e9e;background:linear-gradient(#c8d8e6,#87a5bf);border-radius:0 2px 2px 0;display:flex;align-items:center;justify-content:center}
.arr::after,.tri{content:"";width:0;height:0;border:2.5px solid transparent;border-top:4px solid #111;border-bottom:0}
.tri{border-width:3px 2px 0}
.year{position:relative;width:136px;height:12px;padding-left:3px;border-radius:4px}
.win-front .year{background:linear-gradient(#f6f7f9,#c4c8d2)}
.year svg{width:10px;height:10px;margin-right:3px}
.year>span,.drop{font-size:7.75px}
.year.open{background:linear-gradient(#a6abb6,#8b92a0);border-color:#222a38}
.open .arr{background:#3a678a}
.open .arr::after{border-top-color:#fff}
.drop{position:absolute;z-index:5;left:-1px;top:12px;width:136px;border:1px solid #111;background:#fff;color:#111}
.drop li{display:flex;align-items:center;height:12.6px;padding-left:3px}
.drop .sel,.tree .sel{background:#39698a;color:#fff}
.search{width:110px;height:13px;display:flex;align-items:center;border:1px solid #8aa9c4;background:linear-gradient(90deg,#e0e6ee 15px,#fff 15px)}
.search svg{width:8px;height:8px;margin:0 1px 0 2px}
.search span{margin-left:4px;color:#8f9296}

.work{flex:1;display:flex;min-height:0;padding-top:3px}
.win-front .work{padding-top:4px}
.side{width:20px;padding:2px 0 0 2px;flex:none}
.win-front .side{padding-top:1px}
.vtab{width:16px;height:79px;border:1px solid #74767b;border-radius:4px;background:linear-gradient(90deg,#f8f8fa,#dfe1e6);writing-mode:vertical-rl;transform:rotate(180deg);display:flex;align-items:center;gap:2px;padding:6px 0 0;line-height:14px}
.vtab svg{width:10px;height:10px;transform:rotate(90deg)}
.vtab svg{transform:rotate(180deg)}
.pane{display:flex;flex-direction:column}
.left{width:543px;border:1px solid #9a9ca2;border-top:0;margin-right:2px}
.win-front .left{width:580px}
.right{flex:1;border-right:1px solid #7f8287;margin-right:1px;min-width:0}
.tabs{height:15px;flex:none;display:flex;border-bottom:1px solid #222b38;padding-left:1px}
.win-front .tabs{height:14px}
.tab{display:flex;align-items:center;gap:2.5px;border:1px solid #2c3440;border-width:1px 1px 0 0;border-radius:0 3px 0 0;padding-left:1px;white-space:nowrap;font-size:7.6px;background:linear-gradient(#eef0f3,#d0d2d8)}
.tab svg{width:10px;height:10px}
.tab:first-child svg{margin-left:-1px}
.tab i{margin-left:auto;margin-right:2.5px;font-size:9px;color:#222}
.tab.on{background:linear-gradient(#c9dcea,#b2cde2);margin-bottom:-1px}
.t1{width:90px;border-left-width:1px;border-radius:3px 3px 0 0}.t2{width:97px}.t3{width:73px}.t4{width:54px}.t5{width:69px}
.t2,.t3{padding-left:2px}
.t5 span{font-weight:bold;letter-spacing:-.3px;margin-left:1px}
.tabctl{margin-left:auto;display:flex;gap:2px;padding:1px 1px 0 0}
.tabctl b{width:12px;height:11px;border:1px solid #6e7278;border-radius:2px;background:linear-gradient(#fff,#dcdfe5);font-size:5px;line-height:9px;text-align:center;font-family:"DejaVu Sans",sans-serif}
.tabctl .dim{opacity:.3}
.sq{display:block;width:6px;height:5px;margin:2px auto;border:1px solid #333}
.strip{height:2px;background:#c9e3f8;flex:none}
.right .tabs{padding-left:0;border:1px solid #2c3440;border-radius:3px 3px 0 0;background:linear-gradient(#e6e8ed,#d4d7de)}
.right .tab{padding-left:4px;border-top:0;border-radius:0;background:none;gap:0;font-size:7.7px}
.right .tab:nth-child(2){padding-left:3px}
.right .tab.on{background:linear-gradient(#c3d5e3,#a9c4d8);padding-left:3px}
.right .tab i{margin-right:2px;font-size:8.5px}
.r1{width:43px}.r2{width:52px}.win-front .r2{width:53px}.r3{width:40px}
.minbox{width:7px;height:6px;border:1px solid #333;margin:4px 3px 0 auto;background:linear-gradient(transparent 2px,#333 2px 3px,transparent 3px) content-box;padding:0 1px}

.overview{flex:1;display:flex;flex-direction:column;padding:0 3px 0 2px}
.duo{display:flex;gap:8px}
.duo .box{width:264px}
.box h2,.ledger h3{font-size:7.8px;font-weight:normal;line-height:12px;height:11px;padding-left:2px;color:#444}
.frame{border:1px solid #95979c;border-radius:4px;box-shadow:inset 1px 1px 1px #b1b3b7,inset -1px -1px 1px #b9bbc0;padding:7px 6px}
.duo .frame{height:191px}
.list{height:178px;width:250px;border:1px solid #8a8c91;background:#fff;padding-top:1px}
.list p{height:11.27px;line-height:11.270px;padding:0 3px;display:flex;justify-content:space-between}
.list p:nth-child(even){background:#fbeedb}
.list b{font-weight:normal}
.list .h{font-weight:bold;font-size:7.3px}
.chartbox{margin-top:5px}
.chartbox .frame{height:283px;padding:6px 5px}
.chart{width:524px;height:272px}
.ylab{font:bold 6.7px "DejaVu Sans",sans-serif;fill:#444}
.period{display:flex;align-items:center;gap:5px;padding:5px 0 0 1px}
.period .combo{width:78px}

.ledger{height:124px;background:#d6d9e0;padding:3px 0 0 7px;flex:none}
.ledger h3{font-weight:bold;font-size:7.5px;height:12px;line-height:13px}
.diff{width:173px;height:62px;border:1px solid #9b9ea6;border-radius:4px;box-shadow:inset 1px 1px 1px #b4b7be;background:#d1d4db;display:grid;grid-template-columns:42px 59px 24px;gap:9px 5px;align-content:start;padding-top:11px;color:#444}
.diff label{text-align:right;line-height:16px}
.field{height:15px;border:1px solid #9da4ae;background:#fff;padding-left:2px;line-height:14px;color:#111}
.ro{width:63px;background:#d3d6dd;border-color:#c6c9d0}
.btn{height:15px;border:1px solid #6c7178;border-radius:3px;background:linear-gradient(#fff,#d8dbe2);text-align:center;font:5px/13px "DejaVu Sans",sans-serif;color:#111}
.wide{margin-left:-3px}
.refresh{width:16px;margin-left:4px;padding:1px 2px;background:#e1ebf3}
.refresh svg{width:10px;height:11px}
.visa{display:flex;margin:8px 0 0 -3px;color:#444}
.visa label{width:30px;line-height:9px}
.visa .combo{width:142px}
.tree{flex:1;background:#fff;white-space:nowrap}
.tree li{display:flex;align-items:center;height:11.27px;border:1px solid transparent}
.tree i{width:11px;height:5px;border-left:4px solid transparent}
.tree i::before{content:"";display:block;width:0;height:0;border:2.5px solid transparent;border-left:4px solid #666;border-right:0}
.tree svg{width:10px;height:10px;margin-right:5px}
.ok{color:#0a9a1c}.bad{color:#a00a14}.leaf{color:#555}
.leaf i{visibility:hidden}
.arts .root{height:12px}
.arts .root i::before{border:2.5px solid transparent;border-top:4px solid #555;border-bottom:0}
.arts li:not(.root){padding-left:21px}
.arts li:not(.root) svg{width:9px;height:9px;margin-right:6px}
.arts .lead{border-color:#73a3cf}

.viewer{flex:1;display:flex;min-height:0}
.modes{width:25px;border-right:2px solid #33435a;padding:6px 0 0 1px;flex:none;display:flex;flex-direction:column}
.modes b{height:15px;width:20px;border:1px solid #93969c;border-right:0;border-radius:4px 0 0 4px;background:#e2e4e8;padding:1px 4px}
.modes .cur{background:#b8d0e2}
.modes svg{width:11px;height:11px}
.preview{flex:1;display:flex;flex-direction:column;min-width:0}
.ptools{height:20px;flex:none;display:flex;align-items:center;gap:2.300px;padding:0 0 2px 1px;border-bottom:1px solid #96989e}
.ptools b{width:12px;height:12px;border:1px solid #a0a3aa;border-radius:3px;background:#e6e8ec;padding:.5px}
.ptools b svg{width:9px;height:9px}
.ptools .s1{margin-right:6px}.ptools .s2{margin-right:6px}
.pno{width:22px;height:11px;background:#fff;margin:0 7px 0 1px}
.ptools .zoom{width:48px;height:12px;background:#fff;border-radius:0 3px 3px 0;margin-left:-1px}
.scroller{flex:1;display:flex;min-height:0}
.canvas{flex:1;border-left:1px solid #a3a5aa;padding:2px 0 0 94px;overflow:hidden}
.vbar{width:12px;display:flex;flex-direction:column;border:1px solid #a5a8ae;background:#dfe1e6}
.vbar b,.hbar b{font:5.500px/9px "DejaVu Sans",sans-serif;width:10px;height:10px;text-align:center;background:#eef0f2;color:#333}
.vbar i{flex:1;margin:-1px 0 16px;border:1px solid #4d7089;border-width:1px 2px 1px 1px;border-radius:6px;background:linear-gradient(90deg,#a9c9df,#e9f6fd 50%,#a8cbe2)}
.hbar{height:9px;width:541px;display:flex;border:1px solid #8b8e94;background:#e4e6ea}
.hbar i{flex:1;margin:0 1px;border:1px solid #73777e;border-width:0 1px;border-radius:5px;background:linear-gradient(#f5f6f8,#c9ccd3)}
.hbar b{height:7px;line-height:7px}
.pagepos{height:10px;line-height:13px;text-align:center;font-weight:bold;font-size:6.800px}
.win-front .right{background:#fff}
.status{height:16px;flex:none;border-top:1px solid #95989e;margin-top:3px;display:flex;justify-content:flex-end;align-items:center;padding-right:2px}
.status svg{width:14px;height:14px;margin-right:4px}
.status i{height:11px;background:#d6d9e0;border-right:1px solid #b9bcc2}
.m1{width:42px}.m2{width:16px}

.inv{width:349px;height:490px;background:#fff;border:1px solid #111;color:#222;font-size:4.700px;line-height:5.350px;padding:12px 18px 0 29px;display:flex;flex-direction:column}
.inv-top{display:flex;height:87px}
.brand{width:90px;height:44px}
.bt1{font:300 16px "Open Sans",sans-serif;fill:#3a3a3a}
.bt2{font:italic 14.5px "Liberation Serif",serif;fill:#e07a16}
.inv-id{margin-left:64px}
.inv-id h2{font:14px/15px "Liberation Sans",Arial,sans-serif;color:#111;padding-left:74px;letter-spacing:.35px}
.ids{display:flex;padding-top:7px}
.ids div{width:53px}
.ids div:nth-child(2){width:48px}
.ids dt,address small{display:block;font-size:3.800px;line-height:5px;white-space:nowrap}
.ids dd,address{font-size:6.100px;line-height:6.050px;color:#111}
address{margin-top:7px;line-height:5.900px}
.terms{display:grid;grid-template-columns:43px 111px 44px 60px;row-gap:3.700px;white-space:nowrap}
.terms b{font-size:4.850px}
.terms b,.hd b{color:#000}
.pgno{text-align:right;padding:14px 12px 0 0;height:24.300px}
.lines{display:grid;grid-template-columns:36px 137px 9px 10px 52px 20px 36px;text-align:right;white-space:nowrap}
.lines span:first-child,.lines span:nth-child(2){text-align:left;padding-left:1.500px}
.lines span:nth-child(2){font-size:5.100px}
.lines.hd{height:9.300px;grid-template-columns:36px 137px 14px 22px 33px 23px 31px;font-size:4.600px}
.lines.hd b:nth-child(-n+2){text-align:left}
.sums{display:flex;justify-content:space-between;margin-top:197px}
.vat{width:72px}
.vat p{display:flex;justify-content:space-between;height:6.900px}
.tot{width:110px}
.tot p{display:grid;grid-template-columns:65px 45px;text-align:right;height:6.500px}
.tot .big{font-size:6.450px;font-weight:bold;color:#000;height:8.400px;line-height:9px}
.tot em{display:block;font-size:5.900px;text-align:right;color:#111;line-height:12px}
.foot{display:grid;grid-template-columns:92px 77px 74px 57px;border-top:1px solid #111;margin-top:2.500px;padding-top:1px;line-height:5.250px;white-space:nowrap;font-size:4.300px}
.foot div:first-child{font-size:5px}
.giro{font-size:5px;line-height:6.600px;display:grid;grid-template-columns:24px 33px;align-content:start}
.foot b{color:#000}
```
